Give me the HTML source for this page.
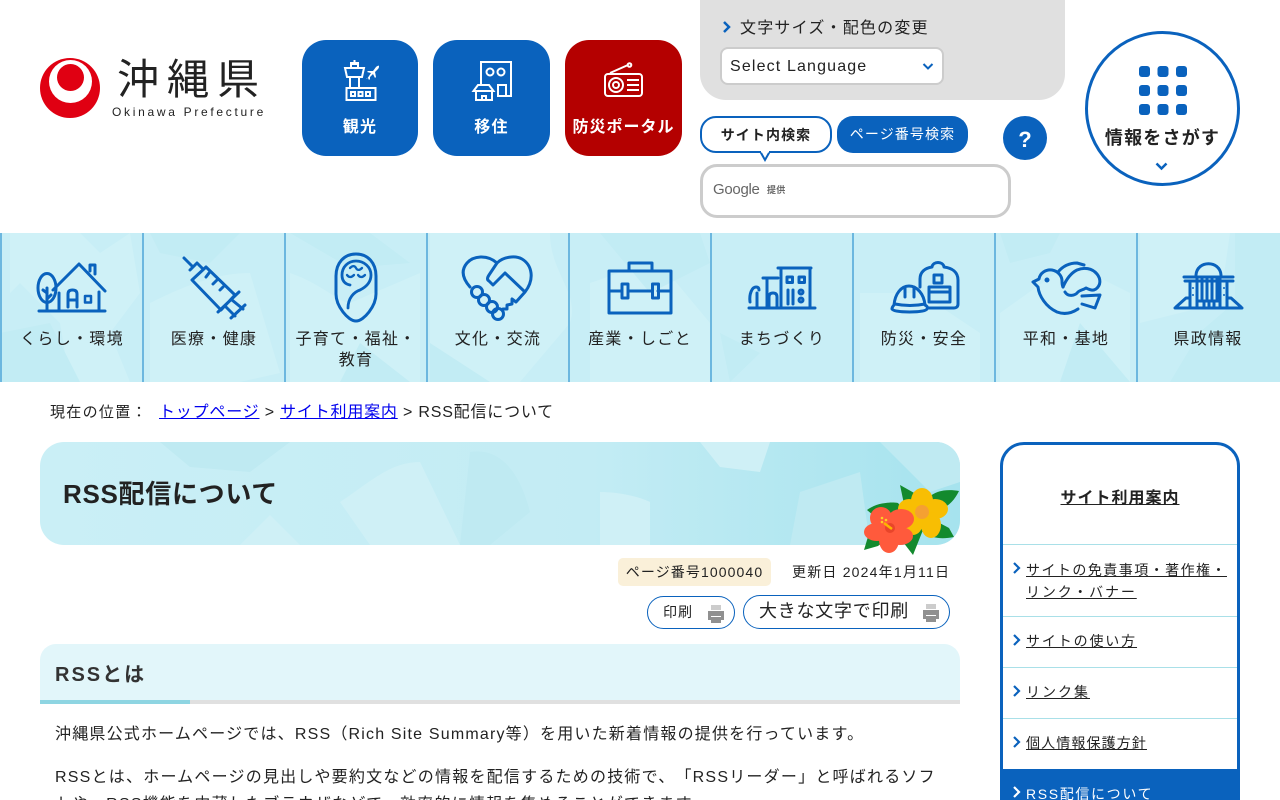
<!DOCTYPE html>
<html lang="ja"><head><meta charset="utf-8"><title>RSS配信について｜沖縄県公式ホームページ</title>
<style>
html,body{margin:0;padding:0;width:1280px;height:800px;overflow:hidden;background:#fff}
body{position:relative;font-family:"Liberation Sans","Noto Sans CJK JP",sans-serif;color:#222;font-size:16px;letter-spacing:1.28px;text-spacing-trim:space-all}
.a{position:absolute;white-space:nowrap}
.c{text-align:center}
.b{font-weight:700}
svg{position:absolute;overflow:visible}
.btn{position:absolute;top:40px;height:116px;border-radius:24px;background:#0a62bd;color:#fff}
.btn span{position:absolute;left:0;right:0;top:76px;line-height:24px;text-align:center;font-weight:700;font-size:16px;letter-spacing:1.2px;white-space:nowrap}
.navb{position:absolute;top:233px;height:149px;width:2px;background:#6cb7df}
.nt{position:absolute;width:140px;text-align:center;font-size:16px;line-height:21px;letter-spacing:1.3px;top:329px}
.i{fill:none;stroke:#0a62bd;stroke-width:3;stroke-linecap:round;stroke-linejoin:round}
.w{fill:none;stroke:#fff;stroke-width:2}
.s a{color:#222;text-decoration:underline}
.s{font-size:14px;letter-spacing:1.45px;line-height:22px}
.hr{position:absolute;left:1003px;width:234px;height:1px;background:#a9e0e8}
a{color:#0000ee}
</style></head><body>

<!-- logo -->
<svg style="left:0;top:0" width="300" height="130"><circle cx="70" cy="88" r="30" fill="#e00012"/><circle cx="70.5" cy="81.5" r="21.500" fill="#fff"/><circle cx="70.5" cy="77.5" r="13.5" fill="#e00012"/></svg>
<div class="a" style="left:117px;top:47px;font-family:'Noto Sans CJK JP',sans-serif;font-size:42px;line-height:60px;letter-spacing:8px;font-weight:400;color:#222">沖縄県</div>
<div class="a" style="left:112px;top:104px;font-size:12px;line-height:16px;letter-spacing:2.7px;color:#222">Okinawa Prefecture</div>

<!-- buttons -->
<div class="btn" style="left:302px;width:116px"><span>観光</span></div>
<div class="btn" style="left:433px;width:117px"><span>移住</span></div>
<div class="btn" style="left:565px;width:117px;background:#b40000"><span style="letter-spacing:1px">防災ポータル</span></div>
<svg style="left:0;top:0" width="700" height="130">
<g class="w"><rect x="346.500" y="88" width="29" height="12"/><rect x="351" y="92" width="4" height="4"/><rect x="358.500" y="92" width="4" height="4"/><rect x="366" y="92" width="4" height="4"/><path d="M350 88V77h9v11M349 77h11M345 68h19l-2 9h-15zM351 68v-4h7v4M350 63h9M354.500 63v-3"/></g>
<path d="M367 79l4-6-4-1 1-1 5 0 3-4c1-1 3-2 3-1s0 2-1 3l-3 3 1 5-1 1-2-4-3 3 0 2-1 1-1-2-2 1z" fill="#fff"/>
<g class="w"><path d="M481 84V62h30v34h-14"/><circle cx="490" cy="72" r="3.500"/><circle cx="501" cy="72" r="3.500"/><path d="M498 95V85h8v11"/><path d="M476 100V91h16v9zM473.500 91l4.500-6h11l4.500 6zM482 100v-4h4v4"/></g>
<g class="w"><rect x="605" y="74" width="37" height="22" rx="3"/><path d="M610 73l18-8"/><circle cx="629.500" cy="65" r="1.800"/><circle cx="616" cy="85" r="7"/><circle cx="616" cy="85" r="3"/><path d="M627 80h12M627 85h12M627 90h12"/></g>
</svg>

<!-- top tools -->
<div class="a" style="left:700px;top:0;width:365px;height:100px;background:#e0e0e0;border-radius:0 0 26px 26px"></div>
<svg style="left:0;top:0" width="1280" height="200"><path d="M724 22l5 5-5 5" fill="none" stroke="#0a62bd" stroke-width="2.500"/></svg>
<div class="a" style="left:740px;top:17px;line-height:24px;font-size:16px;letter-spacing:1.2px">文字サイズ・配色の変更</div>
<div class="a" style="left:720px;top:47px;width:224px;height:38px;box-sizing:border-box;background:#fff;border:2px solid #ccc;border-radius:8px"></div>
<div class="a" style="left:730px;top:55px;line-height:24px;font-size:16px;letter-spacing:1.15px">Select Language</div>
<svg style="left:0;top:0" width="1280" height="200"><path d="M923.500 64l4.500 4.500 4.500-4.500" fill="none" stroke="#0a62bd" stroke-width="2"/></svg>

<div class="a" style="left:700px;top:116px;width:132px;height:37px;box-sizing:border-box;border:2px solid #0a62bd;border-radius:16px;background:#fff"></div>
<svg style="left:0;top:0" width="1280" height="200"><path d="M760.500 152l4.500 8 4.500-8" fill="#fff" stroke="#0a62bd" stroke-width="2"/><path d="M761 150.500h8v2h-8z" fill="#fff"/></svg>
<div class="a c b" style="left:700px;top:123.500px;width:132px;line-height:23px;font-size:14px;letter-spacing:1.1px">サイト内検索</div>
<div class="a c" style="left:837px;top:116px;width:131px;height:37px;border-radius:16px;background:#0a62bd;color:#fff;line-height:37px;font-size:14px;letter-spacing:1.1px">ページ番号検索</div>
<div class="a c b" style="left:1003px;top:116px;width:44px;height:44px;border-radius:50%;background:#0a62bd;color:#fff;line-height:47px;font-size:22px;letter-spacing:0">?</div>
<div class="a" style="left:700px;top:164px;width:311px;height:54px;box-sizing:border-box;border:3px solid #ccc;border-radius:17px;background:#fff"></div>
<div class="a" style="left:713px;top:180px;line-height:20px;font-size:15px;letter-spacing:-.3px;color:#666">Google</div>
<div class="a b" style="left:767px;top:183px;line-height:14px;font-size:9px;letter-spacing:.3px;color:#666">提供</div>

<!-- info circle -->
<div class="a" style="left:1085px;top:31px;width:155px;height:155px;box-sizing:border-box;border:3px solid #0a62bd;border-radius:50%"></div>
<svg style="left:0;top:0" width="1280" height="200" fill="#0a62bd">
<rect x="1139" y="66" width="11" height="11" rx="3"/><rect x="1157.500" y="66" width="11" height="11" rx="3"/><rect x="1176" y="66" width="11" height="11" rx="3"/>
<rect x="1139" y="85" width="11" height="11" rx="3"/><rect x="1157.500" y="85" width="11" height="11" rx="3"/><rect x="1176" y="85" width="11" height="11" rx="3"/>
<rect x="1139" y="104" width="11" height="11" rx="3"/><rect x="1157.500" y="104" width="11" height="11" rx="3"/><rect x="1176" y="104" width="11" height="11" rx="3"/>
<path d="M1156.500 163.500l5 5 5-5" fill="none" stroke="#0a62bd" stroke-width="2.500"/></svg>
<div class="a c b" style="left:1085px;top:125px;width:155px;line-height:26px;font-size:18px;letter-spacing:1.2px">情報をさがす</div>

<!-- nav background -->
<svg style="left:0;top:233px" width="1280" height="149"><rect width="1280" height="149" fill="#c8eef6"/>
<g fill="#cff1f7"><path d="M10 0h70l20 20 30-20 10 60-30 40 20 49H70L60 90 20 50 10 60z"/><path d="M150 70c40-20 70-30 100-30l30 100-40 9H150z"/><path d="M290 40c30 10 50 30 60 30l70-30v109H290z"/><path d="M430 0h120c0 40 30 60 20 90l-50 59H430z"/><path d="M590 50c30-10 50-20 70-20l50 60v59H590z"/><path d="M860 60l60 0 60 40v49H860z"/><path d="M1000 80l70-50 60 30v89h-130z"/><path d="M1140 0h90l-10 70-80 20z"/></g>
<g fill="#c2ecf4"><path d="M150 0h90l-30 30-50-10zM290 0h80l40 30-60 5zM600 0h100l10 30-60 30zM1235 0h45v149h-110l30-50 35-30zM1080 90l50 59h-70z"/><path d="M0 100l50-10 30 59H0zM430 110l60 39h-60zM720 100l40 20-30 29zM360 110l50 39h-70zM1000 0h60l-10 20-40 10z"/></g></svg>
<div class="navb" style="left:0"></div><div class="navb" style="left:142px"></div><div class="navb" style="left:284px"></div><div class="navb" style="left:426px"></div><div class="navb" style="left:568px"></div><div class="navb" style="left:710px"></div><div class="navb" style="left:852px"></div><div class="navb" style="left:994px"></div><div class="navb" style="left:1136px"></div>

<div class="nt" style="left:2px">くらし・環境</div>
<div class="nt" style="left:144px">医療・健康</div>
<div class="nt" style="left:286px">子育て・福祉・<br>教育</div>
<div class="nt" style="left:428px">文化・交流</div>
<div class="nt" style="left:570px">産業・しごと</div>
<div class="nt" style="left:712px">まちづくり</div>
<div class="nt" style="left:854px">防災・安全</div>
<div class="nt" style="left:996px">平和・基地</div>
<div class="nt" style="left:1138px">県政情報</div>

<svg style="left:0;top:0" width="1280" height="330"><g class="i">
<!-- house -->
<path d="M39 311h66M53 290l26-26 26 27M90 271v-6h5v9"/><ellipse cx="47" cy="288" rx="9" ry="14.500"/><path d="M47 288v22M47 293l-4-3M47 299l4-4M59 293v17M99 292v18M68 307v-13q0-4 4.500-4t4.500 4v13M68 300h9"/><rect x="85" y="296" width="6" height="6.500" stroke-width="2.500"/>
<!-- syringe -->
<path d="M184 258l9 9M190 270l7-7 5 5M192 280l14-13 29 28-14 15zM209 273l-3 4M217 280l-4 4M223 287l-3 3M218 312l21-20M232 300l11 9M225 306l10 10M231 318l14-13"/>
<!-- baby -->
<path d="M356 254c-12 0-20 9-20 22v18c0 12 12 27 20 27s20-15 20-27v-18c0-13-8-22-20-22z"/><path d="M348 308c0-10 6-16 12-18 6-3 11-8 11-15 0-8-7-14-15-14s-14 6-14 14c0 6 3 9 8 10" stroke-width="2.800"/><path d="M347 275q3 4 7 0M358 275q3 4 7 0M350 268c3-3 5-2 6 0s3 3 6 0" stroke-width="2.300"/>
<!-- heart -->
<path d="M470 287c-8-9-9-17-3-24 6-7 20-9 30 0l-8 12c-2 3-2 5 0 6l4 4 12-12 20 19-9 10-4-3v5l-5 1v4l-4 0M497 263c6-6 18-8 25-4 10 6 13 20 3 33"/><circle cx="477" cy="292" r="5.500"/><circle cx="484" cy="300" r="5.500"/><circle cx="492" cy="307" r="5.500"/><circle cx="498" cy="314" r="5.500"/>
<!-- case -->
<rect x="609" y="271" width="62" height="42"/><path d="M629 271v-8h23v8M609 291h13M628 291h24M658 291h13"/><rect x="622" y="284" width="6" height="14"/><rect x="652.500" y="284" width="6" height="14"/>
<!-- town -->
<path d="M749 308h66M778 268h33M781 308v-40M810 308v-40M763 278h15M767 308v-30"/><rect x="787" y="277" width="5.500" height="5.500"/><rect x="799" y="277" width="5.500" height="5.500"/><path d="M788 290v14M793 290v14"/><circle cx="801" cy="292" r="2"/><circle cx="801" cy="300" r="2"/><path d="M750 302c-1-8 2-15 6-15 2 0 3 1 3 3M757 293v15"/><path d="M769 308v-11q0-4 4-4t4 4v11" /><!-- helmet bag -->
<path d="M892 309c0-2 1-3 2-4 1-11 7-19 15-19s15 8 16 19c2 1 3 2 2 4-2 4-33 4-35 0zM905 287v10M914 287v10M895 304c10 2 20 2 30 0"/><path d="M920 287v-8c0-7 5-11 12-12 1-6 11-6 12 0 8 1 14 5 14 13v24c0 3-2 4-4 4h-25"/><rect x="934" y="275" width="8" height="8"/><rect x="929" y="287" width="21" height="15"/><path d="M929 292h21"/>
<!-- dove -->
<path d="M1033 282l6-3c1-6 7-10 13-9 6 1 10 6 10 11 0 2 0 4 1 6M1033 282l5 5c1 9 8 20 19 25 8 3 15 1 21-3"/><path d="M1063 287c3-7 8-14 14-17 7-3 15-2 20 4 4 5 4 11-1 15-3 2-6 1-10-1-3 2-6 2-8 4-3 4-10 5-13 0"/><path d="M1058 272c5-6 12-9 19-9l7 2M1082 296l18-1-5 13-13-4"/><circle cx="1047" cy="280" r="1" fill="#0a62bd"/>
<!-- gov -->
<path d="M1175 308h67M1176 307l10-9h3M1241 307l-10-9h-3M1184 277h49M1185 281h48M1196 275c1-15 24-15 25 0M1190 281v27M1227 281v27M1197 277v31M1220 277v31M1202 277v22M1207 277v22M1212 277v22M1217 277v22M1197 301h23M1204 301v7M1209 301v7M1214 301v7"/>
</g><circle cx="1193" cy="288" r="1" fill="#0a62bd"/><circle cx="1193" cy="295" r="1" fill="#0a62bd"/><circle cx="1224" cy="288" r="1" fill="#0a62bd"/><circle cx="1224" cy="295" r="1" fill="#0a62bd"/></svg>

<!-- breadcrumb -->
<div class="a" style="left:50px;top:402.500px;line-height:20px;font-size:15px;letter-spacing:1.3px">現在の位置：</div>
<div class="a" style="left:159px;top:402.500px;line-height:20px;font-size:16px;letter-spacing:.8px"><a href="#">トップページ</a> &gt; <a href="#">サイト利用案内</a> &gt; RSS配信について</div>

<!-- title banner -->
<svg style="left:40px;top:442px" width="920" height="103"><defs><linearGradient id="g" x1="0" x2="1" y1="0" y2="0"><stop offset="0" stop-color="#caeff6"/><stop offset=".6" stop-color="#c3ecf4"/><stop offset="1" stop-color="#a6e3ee"/></linearGradient><clipPath id="r"><rect width="920" height="103" rx="24"/></clipPath></defs>
<g clip-path="url(#r)"><rect width="920" height="103" fill="url(#g)"/>
<g fill="#cff0f6"><path d="M300 60c30-20 50-40 80-40l40 83h-90z"/><path d="M200 103l30-30 30 30z"/><path d="M560 50c20 0 40 5 50 10v43H560z"/><path d="M660 0h70l-10 30-40-5z"/></g>
<g fill="#bfeaf2"><path d="M120 0h130l-40 30-60-5zM430 10c30-5 50 20 60 60l-40 33h-30zM760 50l60-20 10 73h-80zM840 0h80v40l-30 10z"/></g></g></svg>
<div class="a b" style="left:63px;top:474px;line-height:40px;font-size:26px;letter-spacing:.7px;color:#222">RSS配信について</div>

<!-- flowers -->
<svg style="left:860px;top:480px" width="105" height="80">
<g fill="#138a2e"><path d="M40 5l16 9-2 13-10-3z"/><path d="M68 18c8-8 20-9 31-7-5 10-12 18-24 19z"/><path d="M65 43c10-4 18 2 24 5l5 9c-10 2-22 2-28-4z"/><path d="M7 30c10-8 25-8 31-7l12 15-30 3z"/><path d="M10 50l-6 20 14-4 10-8z"/><path d="M43 62l10 13 10-25-2-15z"/></g>
<g fill="#f8be03" transform="translate(62,32)"><ellipse cx="0" cy="-11" rx="11" ry="13"/><ellipse cx="13" cy="-3" rx="13" ry="10"/><ellipse cx="9" cy="13" rx="10" ry="13"/><ellipse cx="-9" cy="10" rx="10" ry="13"/><ellipse cx="-13" cy="-3" rx="11" ry="10"/></g>
<circle cx="62" cy="32" r="7" fill="#f5a032"/>
<g fill="#ff5a3c" transform="translate(30,48)"><ellipse cx="-9" cy="-10" rx="11" ry="11"/><ellipse cx="11" cy="-9" rx="13" ry="10"/><ellipse cx="10" cy="8" rx="13" ry="9"/><ellipse cx="-1" cy="12" rx="10" ry="13"/><ellipse cx="-13" cy="4" rx="13" ry="9"/></g>
<circle cx="30" cy="48" r="5" fill="#e8452a"/>
<path d="M32 49l-8-6" stroke="#ffb400" stroke-width="2.500"/><circle cx="22" cy="42" r="1.300" fill="#ffd024"/><circle cx="26" cy="40" r="1.300" fill="#ffd024"/><circle cx="22" cy="38" r="1.300" fill="#ffd024"/>
</svg>

<!-- meta -->
<div class="a c" style="left:618px;top:558px;width:153px;height:28px;background:#faf0d9;border-radius:5px;font-size:14px;line-height:29px;letter-spacing:1.1px">ページ番号1000040</div>
<div class="a" style="left:792px;top:562px;font-size:14px;line-height:20px;letter-spacing:1.2px">更新日 2024年1月11日</div>
<div class="a" style="left:647px;top:596px;width:88px;height:33px;box-sizing:border-box;border:1px solid #0a62bd;border-radius:17px"></div>
<div class="a" style="left:663px;top:602px;font-size:14px;line-height:21px;letter-spacing:1px">印刷</div>
<div class="a" style="left:743px;top:595px;width:207px;height:34px;box-sizing:border-box;border:1px solid #0a62bd;border-radius:17px"></div>
<div class="a" style="left:759px;top:599px;font-size:18px;line-height:25px;letter-spacing:.75px">大きな文字で印刷</div>
<svg style="left:0;top:0" width="1000" height="640" fill="#909090"><path d="M711 605h10v5h-10z" fill="#ccc"/><path d="M708 611h16v9h-3v-4h-10v4h-3z"/><rect x="711" y="617" width="10" height="6"/><g transform="translate(215,0)"><path d="M711 604h10v5h-10z" fill="#ccc"/><path d="M708 610h16v9h-3v-4h-10v4h-3z"/><rect x="711" y="616" width="10" height="6"/></g></svg>

<!-- h2 -->
<div class="a" style="left:40px;top:644px;width:920px;height:56px;background:#e2f6fa;border-radius:16px 16px 0 0"></div>
<div class="a" style="left:40px;top:700px;width:920px;height:4px;background:#e0e0e0"></div>
<div class="a" style="left:40px;top:700px;width:150px;height:4px;background:#8ed5e2"></div>
<div class="a b" style="left:55px;top:659.500px;font-size:20px;line-height:30px;letter-spacing:2px;color:#333">RSSとは</div>

<!-- body text -->
<div class="a" style="left:55px;top:722px;line-height:26px;letter-spacing:1.19px">沖縄県公式ホームページでは、RSS（Rich Site Summary等）を用いた新着情報の提供を行っています。</div>
<div class="a" style="left:55px;top:764px;line-height:27px;letter-spacing:1.22px">RSSとは、ホームページの見出しや要約文などの情報を配信するための技術で、「RSSリーダー」と呼ばれるソフ<br>トや、RSS機能を内蔵したブラウザなどで、効率的に情報を集めることができます。</div>

<!-- sidebar -->
<div class="a" style="left:1000px;top:442px;width:240px;height:400px;box-sizing:border-box;border:3px solid #0a62bd;border-radius:24px"></div>
<div class="a c b s" style="left:1003px;top:488px;width:234px;font-size:16px;letter-spacing:1px"><a href="#">サイト利用案内</a></div>
<div class="hr" style="top:544px"></div><div class="hr" style="top:616px"></div><div class="hr" style="top:667px"></div><div class="hr" style="top:718px"></div>
<div class="a s" style="left:1026px;top:559px;letter-spacing:1.46px"><a href="#">サイトの免責事項・著作権・</a><br><a href="#" style="letter-spacing:1.86px">リンク・バナー</a></div>
<div class="a s" style="left:1026px;top:630px;letter-spacing:1.86px"><a href="#">サイトの使い方</a></div>
<div class="a s" style="left:1026px;top:681px;letter-spacing:2px"><a href="#">リンク集</a></div>
<div class="a s" style="left:1026px;top:732px;letter-spacing:1.12px"><a href="#">個人情報保護方針</a></div>
<div class="a" style="left:1000px;top:769px;width:240px;height:31px;background:#0a62bd"></div>
<div class="a s" style="left:1026px;top:783px;color:#fff;letter-spacing:1.65px">RSS配信について</div>
<svg style="left:0;top:0" width="1280" height="800"><g fill="none" stroke="#0a62bd" stroke-width="2.200"><path d="M1014 563l5 5-5 5M1014 635l5 5-5 5M1014 686l5 5-5 5M1014 737l5 5-5 5"/></g><path d="M1014 787l5 5-5 5" fill="none" stroke="#fff" stroke-width="2.200"/></svg>
</body></html>
